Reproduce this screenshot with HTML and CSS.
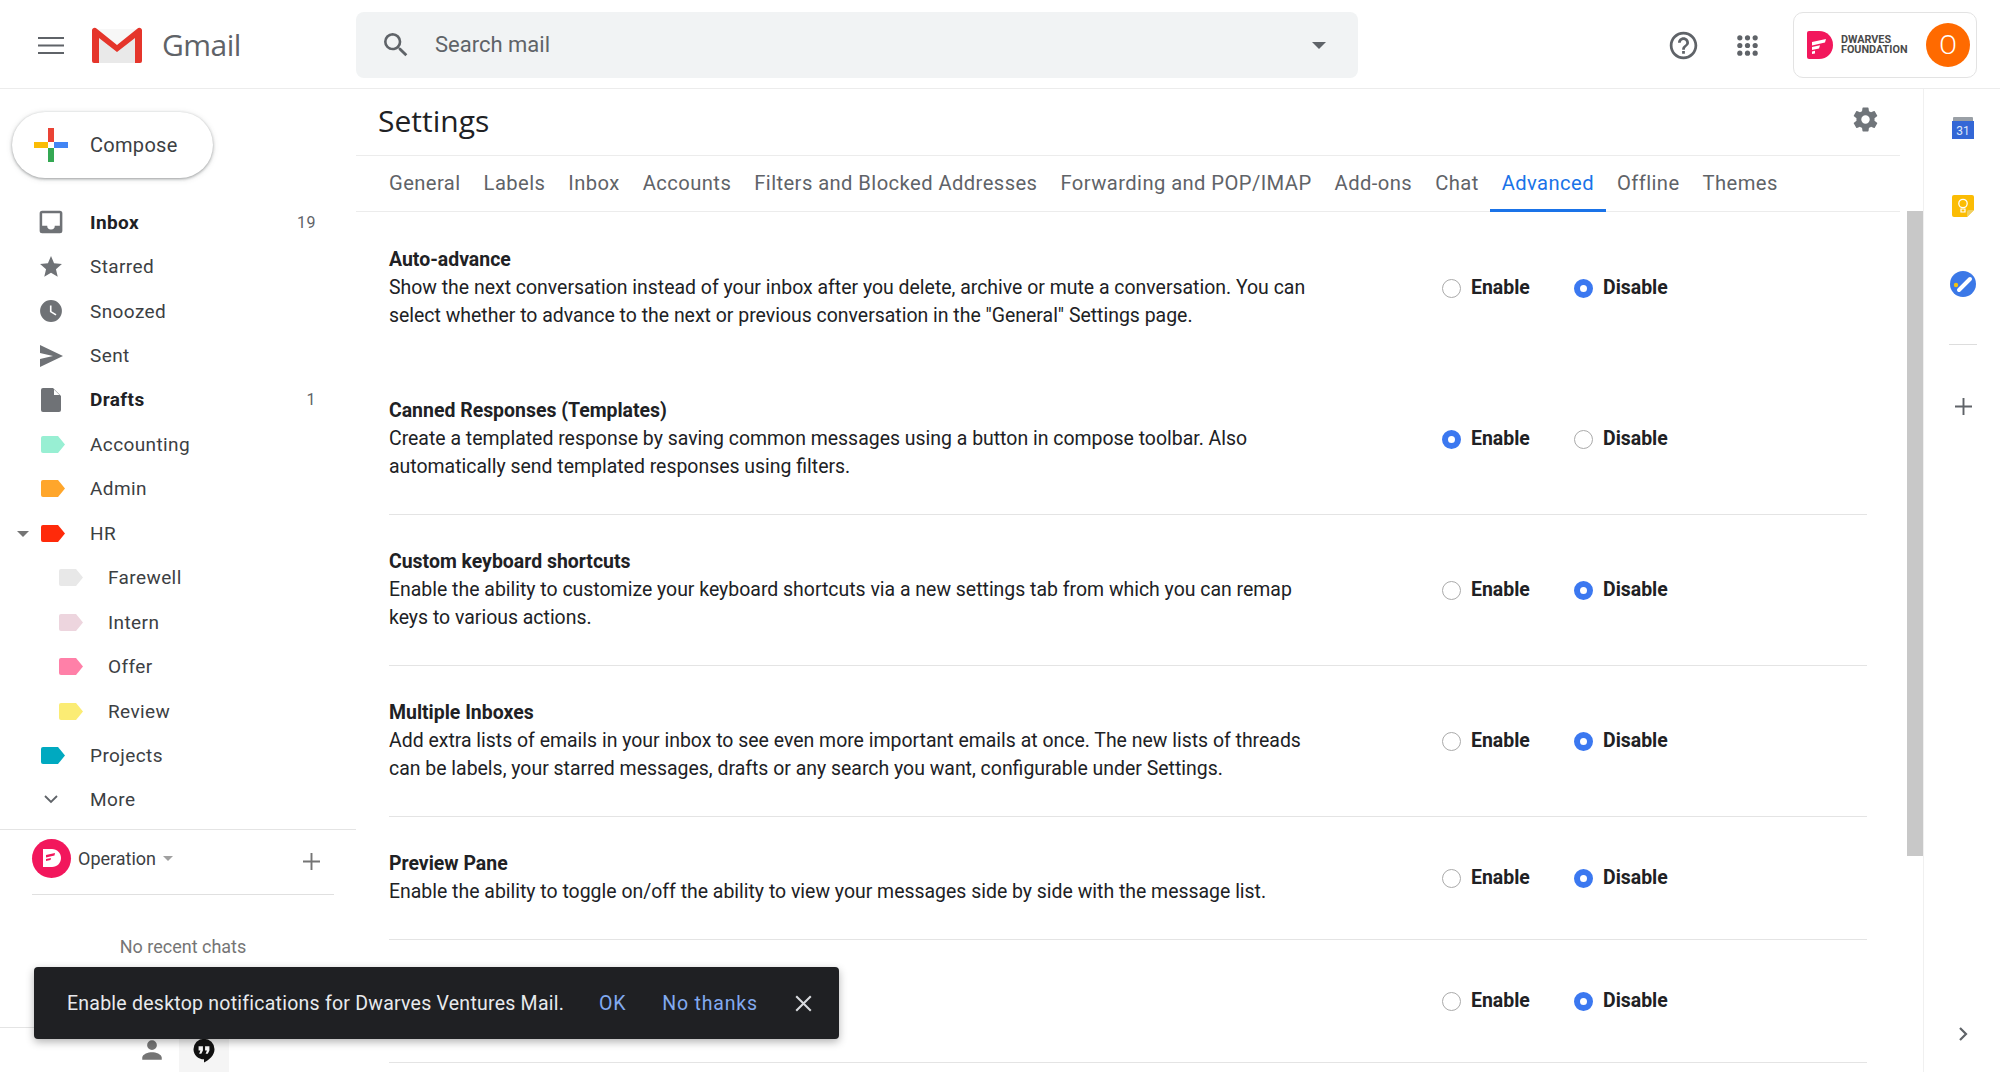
FILE: index.html
```html
<!DOCTYPE html>
<html lang="en">
<head>
    <meta charset="UTF-8">
    <title>Gmail - Settings</title>
    <link rel="stylesheet" href="styles.css">
</head>
<body>
    <header class="topbar">
        <div class="brand">
            <svg class="menu-icon" viewBox="0 0 26 17"><path d="M0 1h26M0 8.500h26M0 16h26" stroke="#5f6368" stroke-width="2.200" fill="none"/></svg>
            <svg class="gmail-logo" viewBox="0 0 50 36">
                <path d="M2 3h46v33H2z" fill="#e9e9e9"/>
                <path d="M4 2h42L25 20z" fill="#f7f7f7"/>
                <path d="M2 36a2 2 0 0 1-2-2V3.500C0 1 3 0 4.500 1.500L25 18 45.500 1.500C47 0 50 1 50 3.500V34a2 2 0 0 1-2 2h-5V11L25 25 7 11v25z" fill="#e5352b"/>
            </svg>
            <span class="gmail-name">Gmail</span>
        </div>
        <div class="search">
            <svg class="search-icon" viewBox="0 0 24 24"><path d="M15.500 14h-.79l-.28-.27A6.470 6.470 0 0 0 16 9.500 6.500 6.500 0 1 0 9.500 16c1.610 0 3.090-.59 4.230-1.570l.27.28v.79l5 4.990L20.490 19l-4.990-5zm-6 0C7.010 14 5 11.990 5 9.500S7.010 5 9.500 5 14 7.010 14 9.500 11.990 14 9.500 14z" fill="#5f6368"/></svg>
            <span class="search-text">Search mail</span>
            <span class="search-caret"></span>
        </div>
        <div class="top-actions">
            <svg class="help-icon" viewBox="0 0 24 24"><path d="M11 18h2v-2h-2v2zm1-16C6.480 2 2 6.480 2 12s4.480 10 10 10 10-4.480 10-10S17.520 2 12 2zm0 18c-4.410 0-8-3.590-8-8s3.590-8 8-8 8 3.590 8 8-3.590 8-8 8zm0-14c-2.210 0-4 1.790-4 4h2c0-1.100.9-2 2-2s2 .9 2 2c0 2-3 1.750-3 5h2c0-2.250 3-2.500 3-5 0-2.210-1.790-4-4-4z" fill="#5f6368"/></svg>
            <svg class="apps-icon" viewBox="0 0 24 24" fill="#5f6368">
                <circle cx="4" cy="4" r="2.700"/><circle cx="12" cy="4" r="2.700"/><circle cx="20" cy="4" r="2.700"/>
                <circle cx="4" cy="12" r="2.700"/><circle cx="12" cy="12" r="2.700"/><circle cx="20" cy="12" r="2.700"/>
                <circle cx="4" cy="20" r="2.700"/><circle cx="12" cy="20" r="2.700"/><circle cx="20" cy="20" r="2.700"/>
            </svg>
            <div class="account">
                <svg class="df-logo" viewBox="0 0 26 28">
                    <path d="M0 2a2 2 0 0 1 2-2h10c8 0 14 6 14 14s-6 14-14 14H2a2 2 0 0 1-2-2z" fill="#f2175c"/>
                    <path d="M5 11l14-3-1 3.500L5 14.500zM5 16l8-1.800-1 3.300-7 1.500zM5 20.500l3-.7v2.600l-3 .6z" fill="#fff"/>
                </svg>
                <div class="df-name"><span>DWARVES</span><span>FOUNDATION</span></div>
                <div class="avatar">O</div>
            </div>
        </div>
    </header>

    <div class="main">
        <aside class="sidebar">
            <div class="compose">
                <svg class="compose-plus" viewBox="0 0 34 34">
                    <path d="M14 0h6v14h-6z" fill="#ea4335"/>
                    <path d="M20 14h14v6H20z" fill="#4285f4"/>
                    <path d="M14 20h6v14h-6z" fill="#34a853"/>
                    <path d="M0 14h14v6H0z" fill="#fbbc05"/>
                </svg>
                <span>Compose</span>
            </div>

            <nav class="nav">
                <div class="nav-row bold">
                    <svg class="nav-icon" viewBox="2.500 2.500 19 19"><path d="M19 3H5a2 2 0 0 0-2 2v14a2 2 0 0 0 2 2h14a2 2 0 0 0 2-2V5a2 2 0 0 0-2-2zm0 12h-4a3 3 0 0 1-6 0H5V5h14z" fill="#6f7276"/></svg>
                    <span class="nav-name">Inbox</span><span class="nav-count">19</span>
                </div>
                <div class="nav-row">
                    <svg class="nav-icon" viewBox="1 1 22 22"><path d="M12 17.270L18.180 21l-1.640-7.030L22 9.240l-7.190-.61L12 2 9.190 8.630 2 9.240l5.460 4.730L5.820 21z" fill="#6f7276"/></svg>
                    <span class="nav-name">Starred</span>
                </div>
                <div class="nav-row">
                    <svg class="nav-icon" viewBox="1 1 22 22"><path d="M12 2a10 10 0 1 0 0 20 10 10 0 0 0 0-20zm4.200 14.200L11 13V7h1.500v5.200l4.500 2.700z" fill="#6f7276" fill-rule="evenodd"/></svg>
                    <span class="nav-name">Snoozed</span>
                </div>
                <div class="nav-row">
                    <svg class="nav-icon" viewBox="0 0 24 24"><path d="M1 1l23 11L1 23v-8l13-3L1 9z" fill="#6f7276"/></svg>
                    <span class="nav-name">Sent</span>
                </div>
                <div class="nav-row bold">
                    <svg class="nav-icon" viewBox="0 0 24 24"><path d="M4 0h10l8 8v14a2 2 0 0 1-2 2H4a2 2 0 0 1-2-2V2a2 2 0 0 1 2-2z" fill="#6f7276"/><path d="M15 1.500L20.500 7H15z" fill="#fff"/></svg>
                    <span class="nav-name">Drafts</span><span class="nav-count">1</span>
                </div>
                <div class="nav-row">
                    <svg class="nav-label" viewBox="0 0 24 17"><path d="M2 0h15l7 8.500L17 17H2a2 2 0 0 1-2-2V2a2 2 0 0 1 2-2z" fill="#98efd3"/></svg>
                    <span class="nav-name">Accounting</span>
                </div>
                <div class="nav-row">
                    <svg class="nav-label" viewBox="0 0 24 17"><path d="M2 0h15l7 8.500L17 17H2a2 2 0 0 1-2-2V2a2 2 0 0 1 2-2z" fill="#ffa62b"/></svg>
                    <span class="nav-name">Admin</span>
                </div>
                <div class="nav-row">
                    <span class="hr-caret"></span>
                    <svg class="nav-label" viewBox="0 0 24 17"><path d="M2 0h15l7 8.500L17 17H2a2 2 0 0 1-2-2V2a2 2 0 0 1 2-2z" fill="#ff2a0a"/></svg>
                    <span class="nav-name">HR</span>
                </div>
                <div class="nav-row sub">
                    <svg class="nav-label" viewBox="0 0 24 17"><path d="M2 0h15l7 8.500L17 17H2a2 2 0 0 1-2-2V2a2 2 0 0 1 2-2z" fill="#e8e8e8"/></svg>
                    <span class="nav-name">Farewell</span>
                </div>
                <div class="nav-row sub">
                    <svg class="nav-label" viewBox="0 0 24 17"><path d="M2 0h15l7 8.500L17 17H2a2 2 0 0 1-2-2V2a2 2 0 0 1 2-2z" fill="#edd5de"/></svg>
                    <span class="nav-name">Intern</span>
                </div>
                <div class="nav-row sub">
                    <svg class="nav-label" viewBox="0 0 24 17"><path d="M2 0h15l7 8.500L17 17H2a2 2 0 0 1-2-2V2a2 2 0 0 1 2-2z" fill="#ff80a8"/></svg>
                    <span class="nav-name">Offer</span>
                </div>
                <div class="nav-row sub">
                    <svg class="nav-label" viewBox="0 0 24 17"><path d="M2 0h15l7 8.500L17 17H2a2 2 0 0 1-2-2V2a2 2 0 0 1 2-2z" fill="#fbec74"/></svg>
                    <span class="nav-name">Review</span>
                </div>
                <div class="nav-row">
                    <svg class="nav-label" viewBox="0 0 24 17"><path d="M2 0h15l7 8.500L17 17H2a2 2 0 0 1-2-2V2a2 2 0 0 1 2-2z" fill="#00a9c0"/></svg>
                    <span class="nav-name">Projects</span>
                </div>
                <div class="nav-row">
                    <svg class="nav-more" viewBox="0 0 14 9"><path d="M1 1l6 6 6-6" stroke="#5f6368" stroke-width="1.800" fill="none"/></svg>
                    <span class="nav-name">More</span>
                </div>
            </nav>

            <div class="chat">
                <div class="chat-user">
                    <div class="chat-avatar">
                        <svg viewBox="0 0 20 20"><path d="M1 1h9c5 0 9 4 9 9s-4 9-9 9H1z" fill="#fff"/><path d="M4 7l9-2-.5 2.500L4 9.500zM4 11l5-1-.5 2L4 13z" fill="#f2175c"/></svg>
                    </div>
                    <span class="chat-name">Operation</span>
                    <span class="chat-caret"></span>
                    <svg class="chat-add" viewBox="0 0 16 16"><path d="M8 0v16M0 8h16" stroke="#757575" stroke-width="1.800"/></svg>
                </div>
                <div class="no-chats">No recent chats</div>
            </div>

            <div class="side-footer">
                <div class="foot-tab">
                    <svg viewBox="0 0 24 24"><path d="M12 12a4.500 4.500 0 1 0 0-9 4.500 4.500 0 0 0 0 9zm0 2c-3.300 0-9 1.700-9 5v2h18v-2c0-3.300-5.700-5-9-5z" fill="#757575"/></svg>
                </div>
                <div class="foot-tab active">
                    <svg viewBox="0 0 24 24"><path d="M12 1.500a9.700 9.700 0 0 0-9.700 9.700c0 5.400 4.400 9.300 9.700 9.300v3c4.800-2.300 9.700-6.800 9.700-12.300A9.700 9.700 0 0 0 12 1.500zM11 12.500l-1.500 3H7.500l1.200-3H7v-4h4zm6 0l-1.500 3h-2l1.200-3H13v-4h4z" fill="#111" fill-rule="evenodd"/></svg>
                </div>
            </div>
        </aside>

        <section class="content">
            <div class="settings">
                <div class="settings-head">
                    <h1>Settings</h1>
                    <svg class="gear" viewBox="0 0 24 24"><path d="M19.430 12.980c.04-.32.070-.64.070-.98s-.03-.66-.07-.98l2.110-1.650a.5.5 0 0 0 .12-.64l-2-3.460a.5.5 0 0 0-.61-.22l-2.490 1a7.300 7.300 0 0 0-1.690-.98l-.38-2.650A.49.490 0 0 0 14 2h-4a.49.490 0 0 0-.49.42l-.38 2.650c-.61.25-1.170.59-1.690.98l-2.490-1a.49.490 0 0 0-.61.22l-2 3.460a.49.490 0 0 0 .12.64l2.110 1.650c-.04.32-.07.65-.07.98s.03.66.07.98l-2.110 1.650a.5.5 0 0 0-.12.64l2 3.460c.12.22.39.3.61.22l2.490-1c.52.4 1.080.73 1.690.98l.38 2.650c.03.24.24.42.49.42h4c.25 0 .46-.18.49-.42l.38-2.650c.61-.25 1.170-.59 1.690-.98l2.490 1c.23.09.49 0 .61-.22l2-3.460a.5.5 0 0 0-.12-.64zM12 15.500a3.500 3.500 0 1 1 0-7 3.500 3.500 0 0 1 0 7z" fill="#70757a"/></svg>
                </div>
                <div class="tabs">
                    <span class="tab">General</span>
                    <span class="tab">Labels</span>
                    <span class="tab">Inbox</span>
                    <span class="tab">Accounts</span>
                    <span class="tab">Filters and Blocked Addresses</span>
                    <span class="tab">Forwarding and POP/IMAP</span>
                    <span class="tab">Add-ons</span>
                    <span class="tab">Chat</span>
                    <span class="tab active">Advanced</span>
                    <span class="tab">Offline</span>
                    <span class="tab">Themes</span>
                </div>
                <div class="rows">
                    <div class="row no-line">
                        <div class="row-inner">
                            <div class="row-text"><b>Auto-advance</b>Show the next conversation instead of your inbox after you delete, archive or mute a conversation. You can select whether to advance to the next or previous conversation in the "General" Settings page.</div>
                            <div class="choice"><span class="radio"></span><b>Enable</b></div>
                            <div class="choice"><span class="radio on"></span><b>Disable</b></div>
                        </div>
                    </div>
                    <div class="row no-line">
                        <div class="row-inner">
                            <div class="row-text"><b>Canned Responses (Templates)</b>Create a templated response by saving common messages using a button in compose toolbar. Also automatically send templated responses using filters.</div>
                            <div class="choice"><span class="radio on"></span><b>Enable</b></div>
                            <div class="choice"><span class="radio"></span><b>Disable</b></div>
                        </div>
                    </div>
                    <div class="row">
                        <div class="row-inner">
                            <div class="row-text"><b>Custom keyboard shortcuts</b>Enable the ability to customize your keyboard shortcuts via a new settings tab from which you can remap keys to various actions.</div>
                            <div class="choice"><span class="radio"></span><b>Enable</b></div>
                            <div class="choice"><span class="radio on"></span><b>Disable</b></div>
                        </div>
                    </div>
                    <div class="row">
                        <div class="row-inner">
                            <div class="row-text"><b>Multiple Inboxes</b>Add extra lists of emails in your inbox to see even more important emails at once. The new lists of threads can be labels, your starred messages, drafts or any search you want, configurable under Settings.</div>
                            <div class="choice"><span class="radio"></span><b>Enable</b></div>
                            <div class="choice"><span class="radio on"></span><b>Disable</b></div>
                        </div>
                    </div>
                    <div class="row short">
                        <div class="row-inner">
                            <div class="row-text"><b>Preview Pane</b>Enable the ability to toggle on/off the ability to view your messages side by side with the message list.</div>
                            <div class="choice"><span class="radio"></span><b>Enable</b></div>
                            <div class="choice"><span class="radio on"></span><b>Disable</b></div>
                        </div>
                    </div>
                    <div class="row short">
                        <div class="row-inner">
                            <div class="row-text"></div>
                            <div class="choice"><span class="radio"></span><b>Enable</b></div>
                            <div class="choice"><span class="radio on"></span><b>Disable</b></div>
                        </div>
                    </div>
                    <div class="row short"></div>
                </div>
            </div>
            <div class="scroll-track"><div class="scroll-thumb"></div></div>
        </section>

        <aside class="addons">
            <svg class="addon-icon" viewBox="-2 -2 26 26">
                <path d="M1 1a1 1 0 0 1 1-1h18a1 1 0 0 1 1 1v5H1z" fill="#9aa0a6"/>
                <path d="M0 4h22v18H0z" fill="#3367d6"/>
                <text x="11" y="18" class="cal-num">31</text>
            </svg>
            <svg class="addon-icon" viewBox="-2 -2 26 26">
                <path d="M2 0h18a2 2 0 0 1 2 2v13l-7 7H2a2 2 0 0 1-2-2V2a2 2 0 0 1 2-2z" fill="#fbbc04"/>
                <path d="M15 22v-5a2 2 0 0 1 2-2h5z" fill="#f0d060"/>
                <circle cx="11" cy="8.500" r="4.200" fill="none" stroke="#fff" stroke-width="1.300"/>
                <path d="M9 14h4v3H9z" fill="none" stroke="#fff" stroke-width="1.200"/>
            </svg>
            <svg class="addon-icon" viewBox="0 0 26 26">
                <circle cx="13" cy="13" r="13" fill="#3b78e7"/>
                <path d="M9 19L20 8" stroke="#fff" stroke-width="4" stroke-linecap="round"/>
                <circle cx="6" cy="14" r="2.200" fill="#f4c20d"/>
            </svg>
            <div class="addon-line"></div>
            <svg class="addon-plus" viewBox="0 0 16 16"><path d="M8 0v16M0 8h16" stroke="#5f6368" stroke-width="1.800"/></svg>
            <svg class="addon-arrow" viewBox="0 0 9 14"><path d="M1 1l6 6-6 6" stroke="#5f6368" stroke-width="2.200" fill="none"/></svg>
        </aside>
    </div>

    <div class="toast">
        <span class="toast-text">Enable desktop notifications for Dwarves Ventures Mail.</span>
        <span class="toast-link ok">OK</span>
        <span class="toast-link thanks">No thanks</span>
        <svg class="toast-close" viewBox="0 0 14 14"><path d="M1 1l12 12M13 1L1 13" stroke="#d8dade" stroke-width="1.700"/></svg>
    </div>
</body>
</html>
```

FILE: styles.css
```css
html, body {
    margin: 0;
    height: 100%;
    overflow: hidden;
}
body {
    display: flex;
    flex-direction: column;
    height: 1072px;
    font-family: Roboto, "Liberation Sans", sans-serif;
    color: #202124;
    background: #fff;
}

/* top bar */
.topbar {
    display: flex;
    align-items: center;
    height: 89px;
    flex: none;
    box-sizing: border-box;
    padding-top: 2px;
    border-bottom: 1px solid #ececec;
}
.brand {
    display: flex;
    align-items: center;
    width: 356px;
    flex: none;
}
.menu-icon {
    width: 26px;
    height: 17px;
    margin-left: 38px;
}
.gmail-logo {
    width: 50px;
    height: 36px;
    margin-left: 28px;
}
.gmail-name {
    margin: 0 0 2px 20px;
    font-family: "Open Sans", sans-serif;
    font-size: 30px;
    color: #5f6368;
    letter-spacing: -0.5px;
}
.search {
    display: flex;
    align-items: center;
    width: 1002px;
    height: 66px;
    border-radius: 8px;
    background: #f1f3f4;
}
.search-icon {
    width: 32px;
    height: 32px;
    margin-left: 24px;
}
.search-text {
    margin: 0 0 2px 23px;
    font-size: 22px;
    color: #5f6368;
}
.search-caret {
    margin-left: auto;
    margin-right: 32px;
    border-top: 7px solid #5f6368;
    border-left: 7px solid transparent;
    border-right: 7px solid transparent;
}
.top-actions {
    display: flex;
    align-items: center;
    margin-left: auto;
}
.help-icon {
    width: 33px;
    height: 33px;
}
.apps-icon {
    width: 23px;
    height: 23px;
    margin-left: 36px;
}
.account {
    display: flex;
    align-items: center;
    width: 184px;
    height: 66px;
    margin-left: 34px;
    margin-right: 23px;
    box-sizing: border-box;
    border: 1px solid #e3e3e3;
    border-radius: 10px;
}
.df-logo {
    width: 26px;
    height: 28px;
    margin-left: 13px;
}
.df-name {
    display: flex;
    flex-direction: column;
    margin-left: 8px;
    font-size: 10.800px;
    line-height: 10px;
    font-weight: 700;
    color: #4a4a4a;
}
.avatar {
    width: 44px;
    height: 44px;
    margin-left: auto;
    margin-right: 6px;
    border-radius: 50%;
    background: #ff6a00;
    color: #fff;
    font-size: 26px;
    font-weight: 300;
    line-height: 44px;
    text-align: center;
}

.main {
    display: flex;
    flex: 1;
    min-height: 0;
}

/* left column */
.sidebar {
    display: flex;
    flex-direction: column;
    width: 356px;
    flex: none;
}
.compose {
    display: flex;
    align-items: center;
    width: 201px;
    height: 66px;
    margin: 23px 0 0 12px;
    box-sizing: border-box;
    border-radius: 33px;
    background: #fff;
    box-shadow: 0 1px 3px rgba(60, 64, 67, 0.45), 0 1px 6px rgba(60, 64, 67, 0.15);
    font-size: 20px;
    letter-spacing: 0.3px;
    color: #3c4043;
}
.compose-plus {
    width: 34px;
    height: 34px;
    margin: 0 22px 0 22px;
}
.nav {
    margin-top: 22px;
}
.nav-row {
    position: relative;
    display: flex;
    align-items: center;
    height: 44.450px;
    padding-left: 39px;
    font-size: 19px;
    letter-spacing: 0.4px;
    color: #3c4043;
}
.nav-row.sub {
    padding-left: 57px;
}
.nav-row.bold {
    font-weight: 700;
    color: #202124;
}
.nav-icon {
    width: 24px;
    height: 24px;
    margin-right: 27px;
    flex: none;
}
.nav-label {
    width: 24px;
    height: 17px;
    margin-left: 2px;
    margin-right: 25px;
    flex: none;
}
.nav-more {
    width: 14px;
    height: 9px;
    margin: 0 32px 0 5px;
    flex: none;
}
.hr-caret {
    position: absolute;
    left: 17px;
    top: 20px;
    border-top: 6px solid #757575;
    border-left: 6px solid transparent;
    border-right: 6px solid transparent;
}
.nav-count {
    margin-left: auto;
    margin-right: 40px;
    font-size: 16px;
    font-weight: 400;
    letter-spacing: 0.5px;
    color: #5f6368;
}
.chat {
    margin-top: 7px;
    padding-left: 32px;
    border-top: 1px solid #e4e4e4;
}
.chat-user {
    display: flex;
    align-items: center;
    width: 302px;
    height: 65px;
    box-sizing: border-box;
    border-bottom: 1px solid #e0e0e0;
    padding-bottom: 8px;
}
.chat-avatar {
    display: flex;
    align-items: center;
    justify-content: center;
    width: 39px;
    height: 39px;
    border-radius: 50%;
    background: #f2175c;
}
.chat-avatar svg {
    width: 20px;
    height: 20px;
}
.chat-name {
    margin-left: 7px;
    font-size: 18px;
    color: #3c4043;
}
.chat-caret {
    margin-left: 7px;
    border-top: 5px solid #a0a0a0;
    border-left: 5px solid transparent;
    border-right: 5px solid transparent;
}
.chat-add {
    width: 17px;
    height: 17px;
    margin-left: auto;
    margin-right: 14px;
    margin-top: 6px;
}
.no-chats {
    margin-top: 41px;
    width: 302px;
    text-align: center;
    font-size: 18px;
    color: #757575;
}
.side-footer {
    display: flex;
    margin-top: auto;
    height: 44px;
    padding-left: 127px;
    border-top: 1px solid #e4e4e4;
}
.foot-tab {
    display: flex;
    align-items: center;
    justify-content: center;
    width: 50px;
}
.foot-tab.active {
    margin-left: 2px;
    background: #f5f5f5;
}
.foot-tab svg {
    width: 26px;
    height: 26px;
}

/* settings */
.content {
    display: flex;
    flex: 1;
    min-width: 0;
}
.settings {
    width: 1544px;
    flex: none;
    overflow: hidden;
}
.settings-head {
    display: flex;
    align-items: center;
    justify-content: space-between;
    height: 66px;
    padding: 0 20px 0 22px;
    border-bottom: 1px solid #ececec;
}
.settings-head h1 {
    margin: 0 0 3px;
    font-family: "Open Sans", sans-serif;
    font-size: 30px;
    font-weight: 400;
    color: #202124;
}
.gear {
    width: 29px;
    height: 29px;
    margin-bottom: 6px;
}
.tabs {
    display: flex;
    height: 55px;
    padding-left: 21.500px;
    border-bottom: 1px solid #ececec;
    font-size: 20.200px;
    letter-spacing: 0.42px;
    color: #5f6368;
}
.tab {
    padding: 0 11.500px;
    line-height: 55px;
    white-space: nowrap;
}
.tab.active {
    color: #1a73e8;
    border-bottom: 3px solid #1a73e8;
    height: 53px;
}
.rows {
    padding: 0 33px;
}
.row {
    height: 151px;
    box-sizing: border-box;
    padding-top: 33px;
    border-top: 1px solid #e4e4e4;
    font-size: 19.450px;
    line-height: 28px;
}
.row.no-line {
    border-top: none;
    padding-top: 34px;
}
.row.short {
    height: 123px;
}
.row-inner {
    display: flex;
    align-items: center;
}
.row-text {
    width: 930px;
    min-height: 56px;
    flex: none;
}
.row-text b {
    display: block;
    font-weight: 700;
}
.choice {
    display: flex;
    align-items: center;
    width: 132px;
    white-space: nowrap;
}
.row-text + .choice {
    margin-left: 123px;
}
.choice b {
    font-weight: 700;
}
.radio {
    width: 19px;
    height: 19px;
    margin-right: 10px;
    box-sizing: border-box;
    border: 1px solid #aaa;
    border-radius: 50%;
}
.radio.on {
    border: 6px solid #3b78f0;
    background: #fff;
}
.scroll-track {
    width: 16px;
    margin-left: 7px;
    padding-top: 122px;
}
.scroll-thumb {
    height: 645px;
    background: #c8c8c8;
}

/* right strip */
.addons {
    display: flex;
    flex-direction: column;
    align-items: center;
    width: 74px;
    flex: none;
    border-left: 1px solid #f0f0f0;
    padding: 26px 0 0 2px;
}
.addon-icon {
    width: 26px;
    height: 26px;
    margin-bottom: 52px;
}
.cal-num {
    font-size: 12px;
    fill: #dfe7fa;
    text-anchor: middle;
}
.addon-line {
    width: 28px;
    height: 1px;
    background: #ddd;
    margin: -5px 0 53px;
}
.addon-plus {
    width: 17px;
    height: 17px;
}
.addon-arrow {
    width: 9px;
    height: 14px;
    margin-top: auto;
    margin-bottom: 31px;
}

/* toast lies over the page */
.toast {
    position: absolute;
    left: 34px;
    top: 967px;
    display: flex;
    align-items: center;
    width: 805px;
    height: 72px;
    box-sizing: border-box;
    padding-left: 33px;
    border-radius: 4px;
    background: #1f2023;
    box-shadow: 0 3px 8px rgba(0, 0, 0, 0.3);
    font-size: 19.500px;
    letter-spacing: 0.24px;
    color: #e8eaed;
}
.toast-link {
    color: #82aaf0;
    letter-spacing: 0.8px;
}
.toast-link.ok {
    margin-left: 35px;
}
.toast-link.thanks {
    margin-left: 36px;
}
.toast-close {
    width: 17px;
    height: 17px;
    margin-left: auto;
    margin-right: 27px;
}
```
